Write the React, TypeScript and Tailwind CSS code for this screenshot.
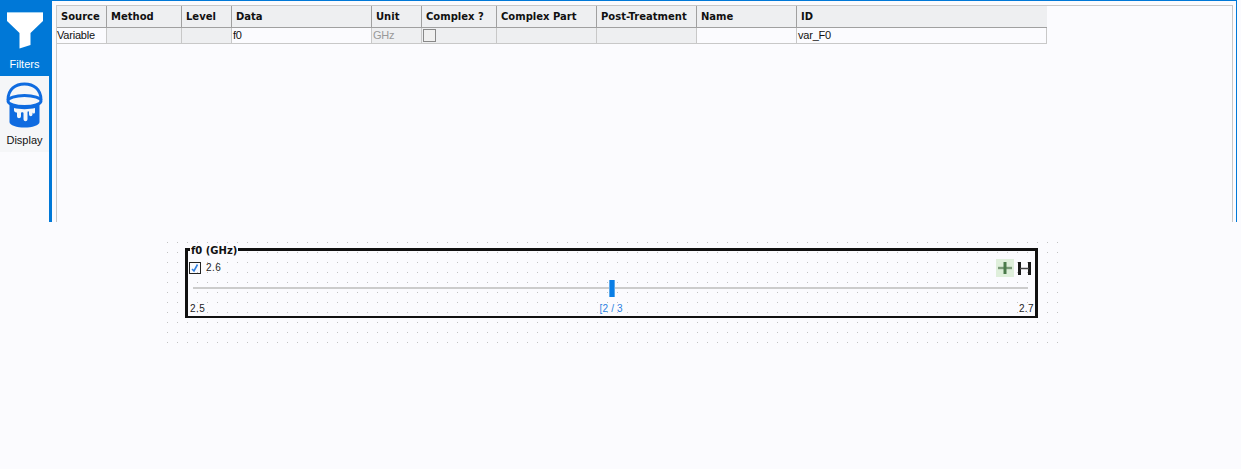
import React from "react";

const columns = [
    { label: "Source", width: "w-[50px]", value: "Variable", bg: "bg-[#fbfbfe]" },
    { label: "Method", width: "w-[75px]", value: "", bg: "bg-[#eeeff1]" },
    { label: "Level", width: "w-[50px]", value: "", bg: "bg-[#eeeff1]" },
    { label: "Data", width: "w-[140px]", value: "f0", bg: "bg-[#fbfbfe]" },
    { label: "Unit", width: "w-[50px]", value: "GHz", bg: "bg-[#eeeff1]" },
    { label: "Complex ?", width: "w-[75px]", value: "", bg: "bg-[#eeeff1]" },
    { label: "Complex Part", width: "w-[100px]", value: "", bg: "bg-[#eeeff1]" },
    { label: "Post-Treatment", width: "w-[100px]", value: "", bg: "bg-[#eeeff1]" },
    { label: "Name", width: "w-[100px]", value: "", bg: "bg-[#fbfbfe]" },
    { label: "ID", width: "w-[250px]", value: "var_F0", bg: "bg-[#fbfbfe]" },
];

function Funnel() {
    return (
        <svg width="48" height="40" viewBox="0 0 48 40" className="block">
            <polygon points="6,1 42,1 42,9 29.5,21 29.5,33 18.5,36.5 18.5,21 6,9" fill="#ffffff" />
            <rect x="6" y="0" width="36" height="1" fill="#9fd0f2" />
        </svg>
    );
}

function Bucket() {
    return (
        <svg width="48" height="48" viewBox="1 0 48 48" className="block">
            <path d="M8 19 C8 8 15.5 3 24.5 3 C33.5 3 41 8 41 19" fill="none" stroke="#0f6be0" strokeWidth="3" />
            <path d="M9.5 20 L9.5 41 C9.5 44.5 17 46.5 24.5 46.5 C32 46.5 39.5 44.5 39.5 41 L39.5 20 Z" fill="#0f6be0" />
            <ellipse cx="24.5" cy="20" rx="16.5" ry="5.5" fill="#f5f6f8" stroke="#0f6be0" strokeWidth="3" />
            <path d="M14 27 C19 28.5 30 28.5 35 27 L35 31 C35 33 32.5 33 32.5 31 L32.5 33 C32.5 36 29 36 29 33 L29 31 C29 30 27.5 30 27.5 31 L27.5 38 C27.5 41 23.5 41 23.5 38 L23.5 32 C23.5 31 21 31 21 32 L21 35 C21 38 17 38 17 35 L17 32 C17 31 14 32 14 29 Z" fill="#f5f6f8" />
        </svg>
    );
}

export default function App() {
    return (
        <div className="w-[1241px] h-[469px] overflow-hidden bg-[#fbfbfe] font-['Liberation_Sans',sans-serif]">
            <div className="flex h-[222px]">
                <div className="w-[52px] shrink-0 border-r-[3px] border-[#0078d7]">
                    <div className="h-[76px] bg-[#0078d7] pt-3 flex flex-col items-center">
                        <Funnel />
                        <span className="text-[11px] leading-[14px] text-white mt-[5px]">Filters</span>
                    </div>
                    <div className="h-[76px] bg-[#f5f6f8] pt-[5px] flex flex-col items-center">
                        <Bucket />
                        <span className="text-[11px] leading-[14px] text-[#111] mt-[4px]">Display</span>
                    </div>
                </div>
                <div className="w-[1185px] shrink-0 border-t-[1px] border-r-[1px] border-[#0078d7] pl-1 pt-1 pr-[3px]">
                    <div className="h-full border-l border-t border-r border-[#c8c8c8]">
                        <div className="flex">
                            {columns.map((col) => (
                                <div key={col.label} className={col.width + " shrink-0"}>
                                    <div className={"h-[22px] bg-[#eeeff1] border-b border-b-[#a0a0a0] pl-1 text-[10px] leading-[21px] font-bold text-[#111] whitespace-nowrap font-['DejaVu_Sans',sans-serif] " + (col.label === "ID" ? "" : "border-r border-r-[#a0a0a0]")}>
                                        {col.label}
                                    </div>
                                    <div className={col.bg + " h-[16px] border-b border-r border-[#c8c8c8] text-[11px] leading-[14px] tracking-[-0.2px] whitespace-nowrap " + (col.label === "Source" ? "" : "pl-[1px] ") + (col.label === "Complex ?" ? "pt-[1px] " : "") + (col.label === "Unit" ? "text-[#999]" : "text-[#111]")}>
                                        {col.value}
                                        {col.label === "Complex ?" && (
                                            <div className="w-[13px] h-[13px] border border-[#888] bg-[#f0f0f0]" />
                                        )}
                                    </div>
                                </div>
                            ))}
                        </div>
                    </div>
                </div>
            </div>

            <div className="ml-[167px] mt-[20px] w-[892px] h-[101px] pl-[18px] pt-[6px] bg-[radial-gradient(circle_at_0.5px_0.5px,#c2c2c2_0.7px,transparent_0.9px)] bg-[size:10px_10px]">
                <div className="relative w-[853px] h-[70px] border-l-[3px] border-r-[3px] border-t-[3px] border-b-2 border-[#111]">
                    <span className="absolute left-[2px] top-[-6px] px-[1px] bg-[#fbfbfe] text-[10px] leading-[11px] font-bold text-[#111] font-['DejaVu_Sans',sans-serif]">f0 (GHz)</span>
                    <div className="flex items-center justify-between pl-[1px] pr-[4px] pt-[8px]">
                        <div className="flex items-center gap-[5px]">
                            <div className="w-[12px] h-[12px] border border-[#222] flex items-center justify-center">
                                <svg width="10" height="10" viewBox="0 0 10 10">
                                    <path d="M2 6 L4 8 L7.5 1.5" fill="none" stroke="#2f7fe0" strokeWidth="1.6" />
                                </svg>
                            </div>
                            <span className="text-[10px] leading-[12px] text-[#222] tracking-[0.5px]">2.6</span>
                        </div>
                        <div className="flex items-center gap-[4px]">
                            <div className="w-[18px] h-[18px] bg-[#dfefdb] flex items-center justify-center">
                                <svg width="14" height="14" viewBox="0 0 14 14">
                                    <path d="M0 7 H14" stroke="#7a9a78" strokeWidth="2.4" />
                                    <path d="M7 1 V13" stroke="#4a7a4a" strokeWidth="3" />
                                </svg>
                            </div>
                            <svg width="13" height="13" viewBox="0 0 13 13">
                                <path d="M1.5 0 V13 M11.5 0 V13" stroke="#1a1a1a" strokeWidth="3" />
                                <path d="M2 6.5 H11" stroke="#444" strokeWidth="1.5" />
                            </svg>
                        </div>
                    </div>
                    <div className="relative mt-[10px] ml-[5px] w-[835px] h-[2px] bg-[#cccccc]">
                        <div className="absolute left-[416px] top-[-7px] w-[6px] h-[17px] bg-[#0a7ee6] border-x border-[#5aa9ec]" />
                    </div>
                    <div className="flex justify-between items-center pl-[2px] pr-[1px] mt-[14px] text-[10px] leading-[12px] text-[#222]">
                        <span className="tracking-[0.5px]">2.5</span>
                        <span className="text-[#2a80e0] tracking-[0.2px] mr-[2px]">[2 / 3</span>
                        <span className="tracking-[0.4px]">2.7</span>
                    </div>
                </div>
            </div>
        </div>
    );
}
